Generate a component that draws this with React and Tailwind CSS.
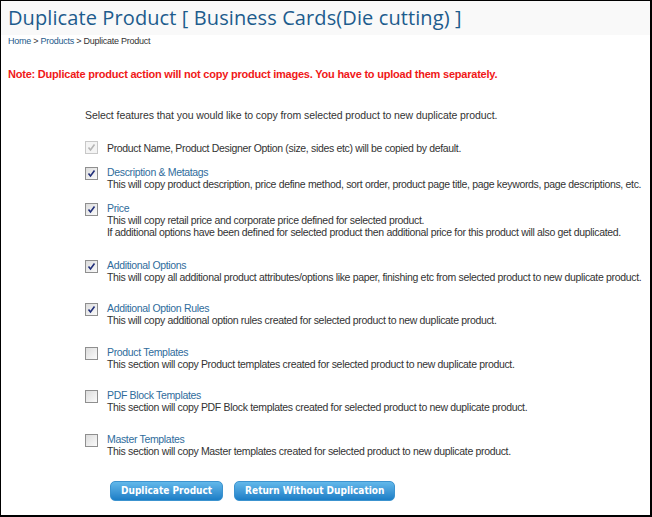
import React from "react";

const items = [
  { title: "Description & Metatags", lines: ["This will copy product description, price define method, sort order, product page title, page keywords, page descriptions, etc."], checked: true, mt: "mt-[13px]" },
  { title: "Price", lines: ["This will copy retail price and corporate price defined for selected product.", "If additional options have been defined for selected product then additional price for this product will also get duplicated."], checked: true, mt: "mt-[13px]" },
  { title: "Additional Options", lines: ["This will copy all additional product attributes/options like paper, finishing etc from selected product to new duplicate product."], checked: true, mt: "mt-[22px]" },
  { title: "Additional Option Rules", lines: ["This will copy additional option rules created for selected product to new duplicate product."], checked: true, mt: "mt-[20px]" },
  { title: "Product Templates", lines: ["This section will copy Product templates created for selected product to new duplicate product."], checked: false, mt: "mt-[21px]" },
  { title: "PDF Block Templates", lines: ["This section will copy PDF Block templates created for selected product to new duplicate product."], checked: false, mt: "mt-[20px]" },
  { title: "Master Templates", lines: ["This section will copy Master templates created for selected product to new duplicate product."], checked: false, mt: "mt-[21px]" },
];

function Box({ checked, disabled }) {
  return (
    <div
      className={
        "w-[13px] h-[13px] shrink-0 border flex items-center justify-center " +
        (disabled
          ? "border-[#c8c8c8] bg-[#f4f4f4]"
          : "border-[#8f8f8f] bg-gradient-to-br from-[#dcdcdc] to-[#fbfbfb]")
      }
    >
      {checked && (
        <svg width="9" height="9" viewBox="0 0 9 9">
          <path
            d="M1.5 4.5 L3.5 7 L7.5 1.5"
            fill="none"
            stroke={disabled ? "#b5b5b5" : "#22307a"}
            strokeWidth="1.6"
          />
        </svg>
      )}
    </div>
  );
}

const btn =
  "h-[20px] px-[10px] rounded-[5px] bg-gradient-to-b from-[#62b8ea] to-[#1b7ec6] border border-[#3c93cf] text-white font-bold text-[10px] leading-[18px] whitespace-nowrap";

export default function App() {
  const body = "font-['Liberation_Sans',Arial,sans-serif]";
  return (
    <div className={"w-[652px] h-[517px] bg-white border-l border-t border-r-2 border-b-2 border-black overflow-hidden text-[#333] " + body}>
      <div className="h-[34px] bg-[#f9f9f9] pl-[7px] pt-[4px]">
        <h1 className="font-['Open_Sans',sans-serif] text-[20px] tracking-[0.1px] leading-[26px] text-[#1d5c8d] whitespace-nowrap">
          Duplicate Product [ Business Cards(Die cutting) ]
        </h1>
      </div>
      <div className="pl-[7px] text-[9px] tracking-[-0.25px] leading-[12px] whitespace-nowrap">
        <span className="text-[#1e5a8c]">Home</span>
        <span> &gt; </span>
        <span className="text-[#1e5a8c]">Products</span>
        <span> &gt; Duplicate Product</span>
      </div>
      <div className="pl-[7px] mt-[20px] text-[11px] tracking-[-0.22px] leading-[14px] font-bold text-[#f01818] whitespace-nowrap">
        Note: Duplicate product action will not copy product images. You have to upload them separately.
      </div>
      <div className="pl-[84px] mt-[28px] text-[10.5px] tracking-[-0.33px] leading-[12px]">
        <div className="whitespace-nowrap text-[10.5px] tracking-[-0.08px]">Select features that you would like to copy from selected product to new duplicate product.</div>
        <div className="flex items-center gap-[9px] mt-[20px]">
          <Box checked disabled />
          <div className="whitespace-nowrap">Product Name, Product Designer Option (size, sides etc) will be copied by default.</div>
        </div>
        {items.map((it) => (
          <div key={it.title} className={"flex items-start gap-[9px] " + it.mt}>
            <Box checked={it.checked} />
            <div className="-mt-[1px]">
              <div className="text-[#2f6c9c] whitespace-nowrap">{it.title}</div>
              {it.lines.map((l) => (
                <div key={l} className="whitespace-nowrap">{l}</div>
              ))}
            </div>
          </div>
        ))}
      </div>
      <div className="flex gap-[11px] pl-[109px] mt-[24px] font-['DejaVu_Sans_Condensed','DejaVu_Sans',sans-serif]">
        <button className={btn}>Duplicate Product</button>
        <button className={btn}>Return Without Duplication</button>
      </div>
    </div>
  );
}
